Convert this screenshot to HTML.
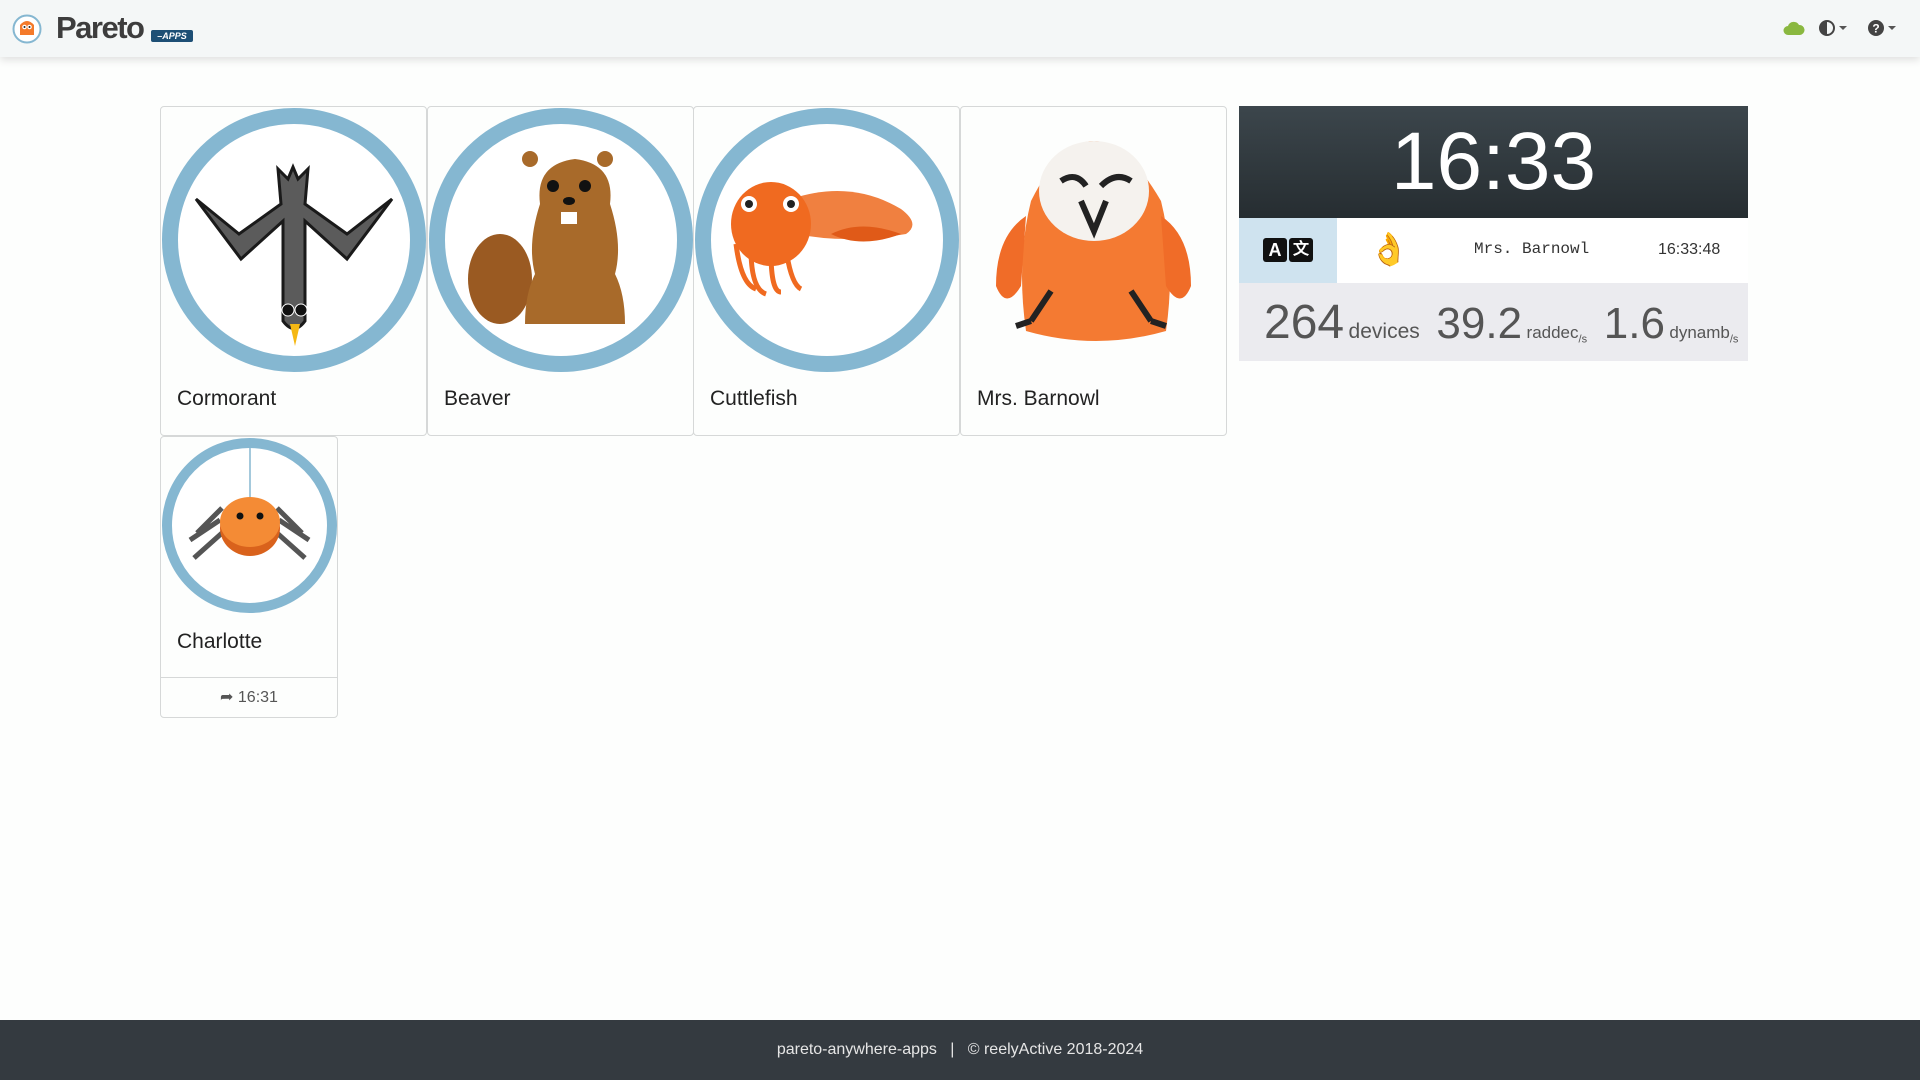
<!DOCTYPE html>
<html><head><meta charset="utf-8"><style>
*{box-sizing:border-box;margin:0;padding:0}
body{width:1920px;height:1080px;background:#fdfefd;font-family:"Liberation Sans","DejaVu Sans",sans-serif;position:relative;overflow:hidden;color:#212529}
.nav{position:absolute;left:0;top:0;width:1920px;height:57px;background:#f4f7f7;box-shadow:0 3px 8px rgba(0,0,0,.12)}
.card{position:absolute;border:1px solid #d6d8d8;border-radius:4px;background:#fdfefd}
.circ{position:absolute;border:16px solid #85b7d1;border-radius:50%;background:#fff;overflow:hidden}
.lbl{position:absolute;font-size:21px;color:#222}
.foot{position:absolute;left:0;top:1020px;width:1920px;height:60px;background:#343a40;color:#e6e6e6;font-size:16px;text-align:center;line-height:60px}
</style></head><body>
<div class="nav">
 <svg style="position:absolute;left:12px;top:14px" width="30" height="30" viewBox="0 0 30 30"><circle cx="15" cy="15" r="13.5" fill="#fff" stroke="#85b7d1" stroke-width="2"/><path d="M8 11q7-8 14 0v10H8z" fill="#f47a2a"/><circle cx="12.5" cy="13" r="2.3" fill="#fff"/><circle cx="17.5" cy="13" r="2.3" fill="#fff"/><circle cx="12.5" cy="13" r="1" fill="#222"/><circle cx="17.5" cy="13" r="1" fill="#222"/></svg>
 <div style="position:absolute;left:56px;top:10px;font-size:31px;font-weight:bold;color:#3d3d3d;letter-spacing:-1.5px">Pareto</div>
 <div style="position:absolute;left:151px;top:30px;width:42px;height:12px;background:#1d4f75;border-radius:2px;color:#fff;font-size:9px;font-style:italic;font-weight:bold;line-height:12px;text-align:center">–APPS</div>
 <svg style="position:absolute;left:1783px;top:20px" width="22" height="16" viewBox="0 0 22 16"><path d="M5 15a4.5 4.5 0 0 1 0-9a6 6 0 0 1 11-1a4.5 4.5 0 0 1 1 10z" fill="#8ab840"/></svg>
 <svg style="position:absolute;left:1819px;top:20px" width="16" height="16" viewBox="0 0 16 16"><circle cx="8" cy="8" r="7" fill="none" stroke="#444" stroke-width="2"/><path d="M8 1a7 7 0 0 0 0 14z" fill="#444"/></svg>
 <div style="position:absolute;left:1839px;top:26px;border:4px solid transparent;border-top-color:#555"></div>
 <svg style="position:absolute;left:1868px;top:20px" width="16" height="16" viewBox="0 0 16 16"><circle cx="8" cy="8" r="8" fill="#444"/><text x="8" y="12.5" font-size="12" font-weight="bold" text-anchor="middle" fill="#fff" font-family="Liberation Sans">?</text></svg>
 <div style="position:absolute;left:1888px;top:26px;border:4px solid transparent;border-top-color:#555"></div>
</div>

<div class="card" style="left:160px;top:106px;width:267px;height:330px">
 <div class="circ" style="left:1px;top:1px;width:264px;height:264px">
  <svg width="232" height="232" viewBox="0 0 232 232"><path d="M18 75l45 60 42-38v100q11 15 22 0V97l42 38 45-60-45 35-42-30 3-35-10 10-5-12-5 12-10-10 3 35-42 30z" fill="#5b5b5b" stroke="#1a1a1a" stroke-width="3"/><circle cx="110" cy="186" r="6" fill="#111" stroke="#fff"/><circle cx="123" cy="186" r="6" fill="#111" stroke="#fff"/><path d="M112 200h10l-5 22z" fill="#f5b814"/></svg>
 </div>
</div>
<div class="lbl" style="left:177px;top:387px">Cormorant</div>

<div class="card" style="left:427px;top:106px;width:267px;height:330px">
 <div class="circ" style="left:1px;top:1px;width:264px;height:264px">
  <svg width="232" height="232" viewBox="0 0 232 232"><ellipse cx="55" cy="155" rx="32" ry="45" fill="#9a5a22"/><path d="M80 200q0-30 10-50q-8-30 5-70q-5-40 35-45q40 5 35 45q13 40 5 70q10 20 10 50z" fill="#a86a2a"/><circle cx="85" cy="35" r="8" fill="#a86a2a"/><circle cx="160" cy="35" r="8" fill="#a86a2a"/><circle cx="108" cy="62" r="6" fill="#111"/><circle cx="140" cy="62" r="6" fill="#111"/><ellipse cx="124" cy="77" rx="6" ry="4" fill="#111"/><rect x="116" y="88" width="16" height="12" fill="#fff"/></svg>
 </div>
</div>
<div class="lbl" style="left:444px;top:387px">Beaver</div>

<div class="card" style="left:693px;top:106px;width:267px;height:330px">
 <div class="circ" style="left:1px;top:1px;width:264px;height:264px">
  <svg width="232" height="232" viewBox="0 0 232 232"><path d="M80 75q60-20 110 10q20 15 5 25q-60 10-110 0z" fill="#f08040"/><ellipse cx="60" cy="100" rx="40" ry="42" fill="#f06a20"/><path d="M25 120q5 40 20 45M40 125q0 40 15 45M60 128q0 40 10 40M75 125q5 35 15 40" stroke="#f06a20" stroke-width="5" fill="none"/><circle cx="38" cy="80" r="8" fill="#fff"/><circle cx="80" cy="80" r="8" fill="#fff"/><circle cx="38" cy="80" r="4" fill="#222"/><circle cx="80" cy="80" r="4" fill="#222"/><path d="M120 110q30-15 70 0q-40 15-70 0z" fill="#e05a18"/></svg>
 </div>
</div>
<div class="lbl" style="left:710px;top:387px">Cuttlefish</div>

<div class="card" style="left:960px;top:106px;width:267px;height:330px">
 <svg style="position:absolute;left:10px;top:14px" width="245" height="245" viewBox="0 0 245 245"><path d="M60 80q60-120 130 0q15 60 5 130q-70 20-140 0q-10-70 5-130z" fill="#f47a32"/><path d="M55 95q-30 20-30 70q10 25 25 0z M190 95q30 20 30 70q-10 25-25 0z" fill="#f06c28"/><ellipse cx="123" cy="70" rx="55" ry="50" fill="#f5f2ee"/><path d="M90 60q15-10 25 5M130 65q15-15 30-5M110 80l13 30 12-30" stroke="#222" stroke-width="6" fill="none"/><path d="M80 170l-20 30M60 200l-15 5M160 170l20 30M180 200l15 5" stroke="#222" stroke-width="6"/></svg>
</div>
<div class="lbl" style="left:977px;top:387px">Mrs. Barnowl</div>

<div class="card" style="left:160px;top:436px;width:178px;height:282px">
 <div class="circ" style="left:1px;top:1px;width:175px;height:175px;border-width:10px">
  <svg width="155" height="155" viewBox="0 0 155 155"><path d="M78 0v50" stroke="#85b7d1" stroke-width="1.5"/><path d="M50 60l-25 25M48 72l-30 20M50 85l-28 25M105 60l25 25M107 72l30 20M105 85l28 25" stroke="#555" stroke-width="5"/><ellipse cx="78" cy="80" rx="30" ry="28" fill="#d9621c"/><ellipse cx="78" cy="74" rx="30" ry="25" fill="#f48b35"/><circle cx="68" cy="68" r="3.5" fill="#111"/><circle cx="88" cy="68" r="3.5" fill="#111"/></svg>
 </div>
 <div class="lbl" style="left:16px;top:193px">Charlotte</div>
 <div style="position:absolute;left:0;right:0;top:240px;border-top:1px solid #d6d8d8;text-align:center;line-height:40px;font-size:16px;color:#555">➦ 16:31</div>
</div>

<div style="position:absolute;left:1239px;top:106px;width:509px;height:112px;background:linear-gradient(#3c464c,#262d31);color:#fff;font-size:82px;text-align:center;line-height:112px">16:33</div>
<div style="position:absolute;left:1239px;top:218px;width:509px;height:65px;background:#fff">
 <div style="position:absolute;left:0;top:0;width:98px;height:65px;background:#cfe3ef"></div>
 <div style="position:absolute;left:24px;top:20px;width:24px;height:24px;background:#111;border-radius:3px;color:#fff;font-weight:bold;font-size:18px;text-align:center;line-height:24px">A</div>
 <div style="position:absolute;left:50px;top:20px;width:24px;height:24px;background:#111;border-radius:3px;color:#fff;font-weight:bold;font-size:16px;text-align:center;line-height:24px">文</div>
 <div style="position:absolute;left:130px;top:12px;font-size:32px;color:#f7b91f">👌</div>
 <div style="position:absolute;left:235px;top:22px;font-family:'Liberation Mono',monospace;font-size:16px;color:#333">Mrs. Barnowl</div>
 <div style="position:absolute;left:419px;top:23px;font-size:16px;color:#333">16:33:48</div>
</div>
<div style="position:absolute;left:1239px;top:283px;width:509px;height:78px;background:#ebebef;color:#555;white-space:nowrap">
 <div style="position:absolute;left:25px;top:12px"><span style="font-size:48px">264</span> <span style="font-size:21px">devices</span> <span style="font-size:44px">&nbsp;39.2</span> <span style="font-size:17px">raddec<sub style="font-size:11px">/s</sub></span> <span style="font-size:44px">&nbsp;1.6</span> <span style="font-size:17px">dynamb<sub style="font-size:11px">/s</sub></span></div>
</div>

<div class="foot">pareto-anywhere-apps &nbsp;&nbsp;|&nbsp;&nbsp; © reelyActive 2018-2024</div>
</body></html>
